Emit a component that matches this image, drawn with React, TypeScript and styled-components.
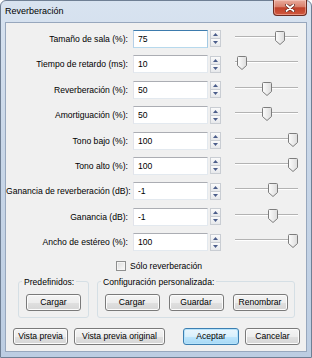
import styled, { createGlobalStyle } from "styled-components";

const GlobalStyle = createGlobalStyle`
  html, body {
    margin: 0;
    padding: 0;
    background: #ffffff;
  }
  body {
    font-family: "Liberation Sans", Arial, sans-serif;
    font-size: 8.6px;
    color: #000000;
  }
`

type Param = {
  label: string
  value: string
  thumb: number
  focused?: boolean
}

const params: Param[] = [
  { label: "Tamaño de sala (%):", value: "75", thumb: 45, focused: true },
  { label: "Tiempo de retardo (ms):", value: "10", thumb: 7 },
  { label: "Reverberación (%):", value: "50", thumb: 32 },
  { label: "Amortiguación (%):", value: "50", thumb: 32 },
  { label: "Tono bajo (%):", value: "100", thumb: 58 },
  { label: "Tono alto (%):", value: "100", thumb: 58 },
  { label: "Ganancia de reverberación (dB):", value: "-1", thumb: 38 },
  { label: "Ganancia (dB):", value: "-1", thumb: 38 },
  { label: "Ancho de estéreo (%):", value: "100", thumb: 58 },
]

const SpinBox = () => (
  <Spin>
    <SpinButton>
      <svg width="5" height="3" viewBox="0 0 5 3">
        <path d="M2.5 0 L5 3 L0 3 Z" fill="#4b5d8a" />
      </svg>
    </SpinButton>
    <SpinButton>
      <svg width="5" height="3" viewBox="0 0 5 3">
        <path d="M0 0 L5 0 L2.5 3 Z" fill="#4b5d8a" />
      </svg>
    </SpinButton>
  </Spin>
)

const Slider = ({ pos }: { pos: number }) => (
  <SliderBox>
    <Track />
    <Thumb style={{ left: pos - 5 }}>
      <svg width="10" height="14" viewBox="0 0 10 14">
        <defs>
          <linearGradient id="thumbFill" x1="0" y1="0" x2="1" y2="0">
            <stop offset="0" stopColor="#fdfdfd" />
            <stop offset="1" stopColor="#dcdcdc" />
          </linearGradient>
        </defs>
        <path
          d="M1.5 0.5 H8.5 Q9.5 0.5 9.5 1.5 V9.5 L5 13.5 L0.5 9.5 V1.5 Q0.5 0.5 1.5 0.5 Z"
          fill="url(#thumbFill)"
          stroke="#7d7d7d"
        />
      </svg>
    </Thumb>
  </SliderBox>
)

export default function App() {
  return (
    <>
      <GlobalStyle />
      <Window>
        <TitleBar>
          <Title>Reverberación</Title>
          <CloseButton>
            <svg width="10" height="8" viewBox="0 0 10 8">
              <path d="M1.5 1 L8.5 7 M8.5 1 L1.5 7" stroke="#5a2018" strokeWidth="3.2" strokeLinecap="round" />
              <path d="M1.5 1 L8.5 7 M8.5 1 L1.5 7" stroke="#ffffff" strokeWidth="1.8" strokeLinecap="round" />
            </svg>
          </CloseButton>
        </TitleBar>
        <Client>
          <Rows>
            {params.map((p) => (
              <Row key={p.label}>
                <Label>{p.label}</Label>
                <TextBox $focused={p.focused} readOnly value={p.value} />
                <SpinBox />
                <Slider pos={p.thumb} />
              </Row>
            ))}
          </Rows>
          <CheckRow>
            <CheckBox />
            <span>Sólo reverberación</span>
          </CheckRow>
          <Groups>
            <GroupBox $width={71}>
              <legend>Predefinidos:</legend>
              <GroupButtons>
                <Button>Cargar</Button>
              </GroupButtons>
            </GroupBox>
            <GroupBox $width={198}>
              <legend>Configuración personalizada:</legend>
              <GroupButtons>
                <Button>Cargar</Button>
                <Button>Guardar</Button>
                <Button>Renombrar</Button>
              </GroupButtons>
            </GroupBox>
          </Groups>
          <Footer>
            <ButtonSet>
              <Button>Vista previa</Button>
              <Button $width={91}>Vista previa original</Button>
            </ButtonSet>
            <ButtonSet>
              <Button $default $width={56}>Aceptar</Button>
              <Button>Cancelar</Button>
            </ButtonSet>
          </Footer>
        </Client>
      </Window>
    </>
  )
}

const Window = styled.div`
  box-sizing: border-box;
  width: 312px;
  height: 358px;
  display: flex;
  flex-direction: column;
  padding: 0 4px 5px 4px;
  border: 1px solid #6f7f94;
  border-radius: 6px 6px 0 0;
  background: linear-gradient(180deg, #d8e3f0 0%, #c9d7e8 40%, #bccde2 100%);
`

const TitleBar = styled.div`
  height: 21px;
  display: flex;
  justify-content: space-between;
  align-items: flex-start;
`

const Title = styled.div`
  font-size: 9px;
  line-height: 21px;
  color: #000000;
`

const CloseButton = styled.div`
  box-sizing: border-box;
  width: 34px;
  height: 16px;
  margin-top: -1px;
  display: flex;
  align-items: center;
  justify-content: center;
  border: 1px solid #6b2c22;
  border-top: none;
  border-radius: 0 0 4px 4px;
  background: linear-gradient(180deg, #e9ab9c 0%, #d9806c 45%, #c0412a 52%, #d0583e 100%);
  box-shadow: inset 0 0 0 1px rgba(255, 220, 210, 0.45);
`

const Client = styled.div`
  flex: 1;
  display: flex;
  flex-direction: column;
  background: #f0f0f0;
  border: 1px solid #97a7bd;
`

const Rows = styled.div`
  display: flex;
  flex-direction: column;
  padding-top: 3.3px;
`

const Row = styled.div`
  height: 25.4px;
  display: flex;
  align-items: center;
`

const Label = styled.div`
  width: 122px;
  text-align: right;
  white-space: nowrap;
`

const TextBox = styled.input<{ $focused?: boolean }>`
  box-sizing: border-box;
  width: 75px;
  height: 18px;
  margin: 0 0 0 5px;
  padding: 0 0 0 4px;
  font: inherit;
  color: #000000;
  background: #ffffff;
  outline: none;
  border: 1px solid;
  border-color: ${(p) =>
    p.$focused ? "#3d7bad #a4c9e3 #b7d9ed #b5cfe7" : "#abadb3 #e3e9ef #e3e9ef #e2e3ea"};
`

const Spin = styled.div`
  width: 11px;
  height: 17px;
  margin-left: 2px;
  display: flex;
  flex-direction: column;
`

const SpinButton = styled.div`
  box-sizing: border-box;
  flex: 1;
  display: flex;
  align-items: center;
  justify-content: center;
  border: 1px solid #c9cdd3;
  background: linear-gradient(180deg, #fbfbfb, #e6e8eb);
  & + & {
    border-top: none;
  }
`

const SliderBox = styled.div`
  position: relative;
  width: 63px;
  height: 18px;
  margin-left: 14px;
`

const Track = styled.div`
  position: absolute;
  left: 0;
  right: 0;
  top: 6px;
  height: 1px;
  background: #b3b3b3;
  border-bottom: 1px solid #ffffff;
`

const Thumb = styled.div`
  position: absolute;
  top: 1px;
  width: 10px;
  height: 14px;
  line-height: 0;
`

const CheckRow = styled.div`
  height: 22px;
  display: flex;
  align-items: center;
  gap: 4px;
  padding-left: 110px;
`

const CheckBox = styled.span`
  box-sizing: border-box;
  width: 10px;
  height: 10px;
  border: 1px solid #8e8f8f;
  background: linear-gradient(135deg, #dcdcdc, #fafafa);
  box-shadow: inset 0 0 0 1px #f4f4f4;
`

const Groups = styled.div`
  display: flex;
  gap: 8px;
  padding-left: 12px;
`

const GroupBox = styled.fieldset<{ $width: number }>`
  box-sizing: border-box;
  width: ${(p) => p.$width}px;
  margin: 0;
  padding: 0 0 6px 0;
  border: 1px solid #d5dfe5;
  border-radius: 3px;
  legend {
    margin-left: 3px;
    padding: 0 2px;
    line-height: 10px;
  }
`

const GroupButtons = styled.div`
  display: flex;
  justify-content: center;
  gap: 9px;
  margin-top: 7px;
`

const Footer = styled.div`
  display: flex;
  justify-content: space-between;
  padding: 0 6px 0 7px;
  margin-top: 10px;
`

const ButtonSet = styled.div`
  display: flex;
  gap: 6px;
`

const Button = styled.div<{ $default?: boolean; $width?: number }>`
  box-sizing: border-box;
  width: ${(p) => p.$width ?? 55}px;
  height: 17px;
  display: flex;
  align-items: center;
  justify-content: center;
  white-space: nowrap;
  color: #000000;
  border: 1px solid ${(p) => (p.$default ? "#3c7fb1" : "#7a7a7a")};
  border-radius: 3px;
  box-shadow: inset 0 0 0 1px ${(p) => (p.$default ? "#b6e3fb" : "#fcfcfc")};
  background: ${(p) =>
    p.$default
      ? "linear-gradient(180deg, #eaf6fd 0%, #d9f0fc 50%, #bee6fd 51%, #a7d9f5 100%)"
      : "linear-gradient(180deg, #f4f4f4 0%, #ededed 50%, #e0e0e0 51%, #d6d6d6 100%)"};
`
